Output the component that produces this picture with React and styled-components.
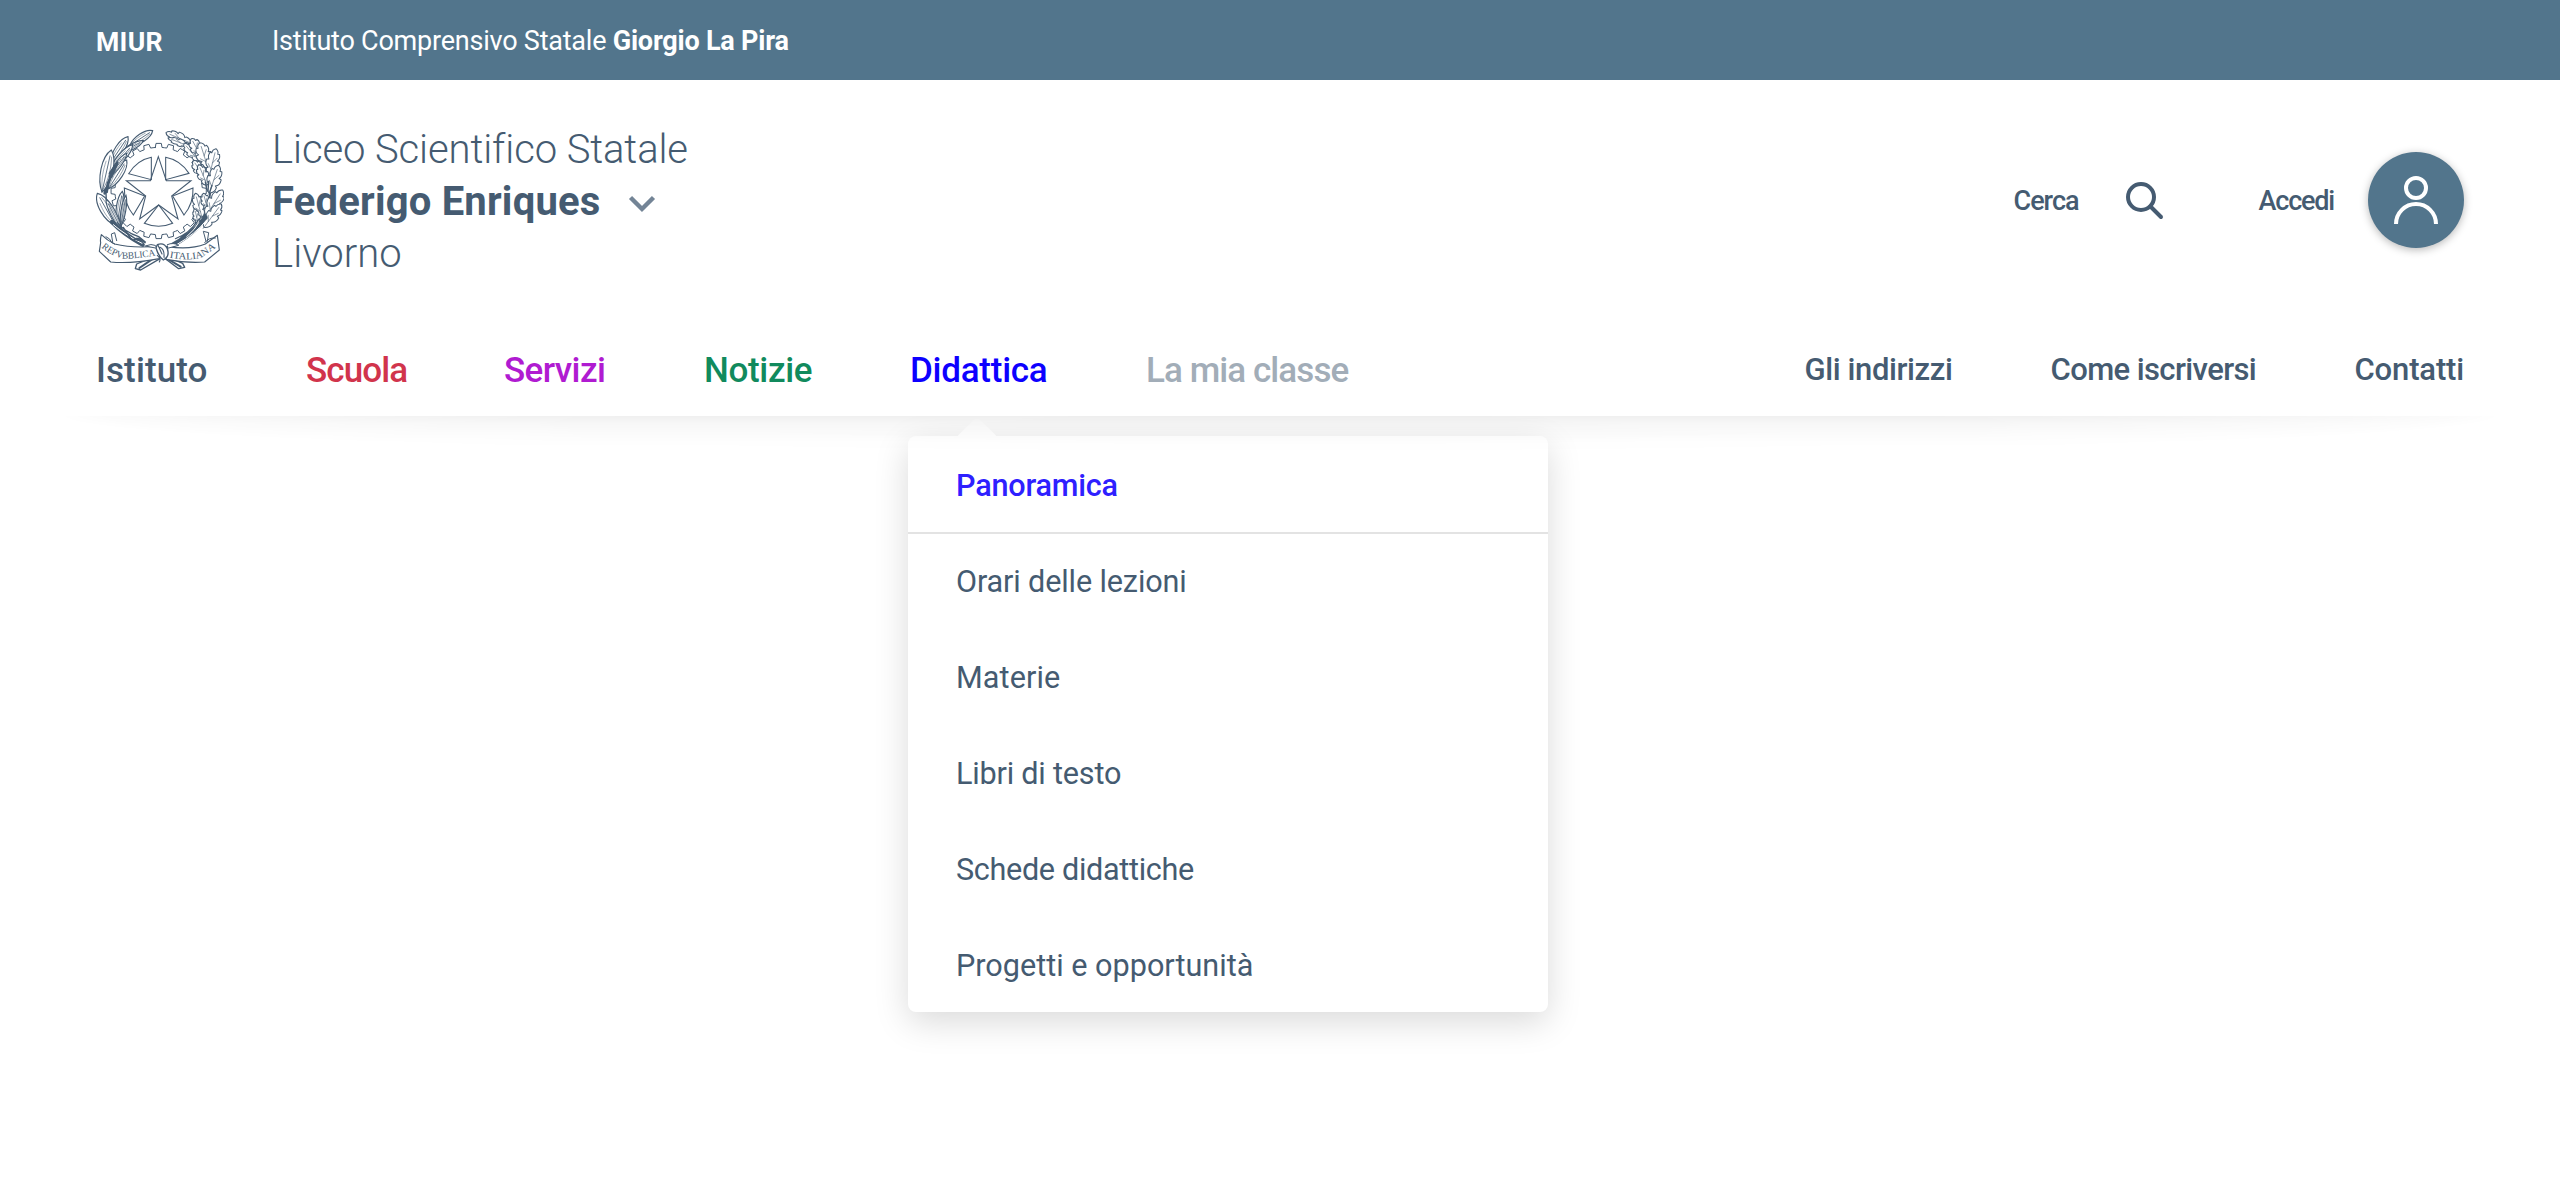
import React from "react";
import styled, { createGlobalStyle } from "styled-components";

const ink = "#455b71";
const steel = "#52758c";

const GlobalStyle = createGlobalStyle`
  * { box-sizing: border-box; }
  body {
    margin: 0;
    background: #fff;
    color: ${ink};
    font-family: Roboto, "Open Sans", sans-serif;
    -webkit-font-smoothing: antialiased;
  }
  a { color: inherit; text-decoration: none; }
`;

const Page = styled.div`
  min-height: 1200px;
  overflow: hidden;
`;

const TopBar = styled.div`
  display: flex;
  align-items: center;
  height: 80px;
  padding: 2px 96px 0;
  background: ${steel};
  color: #fff;
  font-size: 27px;
  line-height: 36px;
  white-space: nowrap;
`;

const Ministry = styled.a`
  width: 176px;
  padding-top: 2px;
  font-size: 26.6px;
  font-weight: 700;
  letter-spacing: 0.3px;
`;

const Institute = styled.a`
  font-weight: 400;
  letter-spacing: -0.22px;

  strong { font-weight: 700; letter-spacing: -0.22px; }
`;

const Header = styled.header`
  position: relative;

  &::after {
    content: "";
    position: absolute;
    z-index: 3;
    top: 100%;
    left: 60px;
    right: 60px;
    height: 40px;
    pointer-events: none;
    background: linear-gradient(
      rgba(0, 0, 0, 0.062) 0,
      rgba(0, 0, 0, 0.036) 8px,
      rgba(0, 0, 0, 0.022) 15px,
      rgba(0, 0, 0, 0.008) 26px,
      rgba(0, 0, 0, 0) 38px
    );
    mask-image: radial-gradient(
      farthest-side at 50% 0,
      #000 0%,
      rgba(0, 0, 0, 0.9) 58%,
      rgba(0, 0, 0, 0.7) 74%,
      rgba(0, 0, 0, 0.45) 89%,
      rgba(0, 0, 0, 0.25) 96%,
      transparent 100%
    );
  }
`;

const BrandRow = styled.div`
  display: flex;
  align-items: center;
  height: 240px;
  padding: 0 96px;
`;

const Title = styled.h1`
  margin: 4px 0 0 48px;
  font-size: 40px;
  font-weight: 300;
  line-height: 52px;
  white-space: nowrap;
`;

const TitleLine = styled.span`
  display: flex;
  align-items: center;
  font-weight: ${(p) => (p.$bold ? 700 : 300)};
  letter-spacing: ${(p) => p.$track || 0}px;

  svg { margin: 3px 0 0 27px; }
`;

const Tools = styled.div`
  display: flex;
  align-items: center;
  margin-left: auto;
  font-size: 27px;
  font-weight: 500;
`;

const Tool = styled.a`
  display: flex;
  align-items: center;
  gap: ${(p) => p.$gap}px;
  margin-left: ${(p) => p.$before || 0}px;
  letter-spacing: ${(p) => p.$track}px;
`;

const ToolLabel = styled.span`
  padding-top: 2px;
`;

const Avatar = styled.span`
  display: grid;
  place-items: center;
  width: 96px;
  height: 96px;
  border-radius: 50%;
  background: ${steel};
  box-shadow: 0 2px 8px rgba(0, 0, 0, 0.28);
`;

const NavRow = styled.nav`
  display: flex;
  justify-content: space-between;
  align-items: center;
  height: 96px;
  padding: 4px 96px 0;
  white-space: nowrap;
`;

const NavList = styled.ul`
  display: grid;
  grid-template-columns: ${(p) => p.$columns};
  margin: ${(p) => p.$top || 0}px 0 0;
  padding: 0;
  list-style: none;
  font-size: ${(p) => p.$size}px;
  font-weight: 500;
  line-height: 44px;
`;

const NavItem = styled.li`
  position: relative;
  color: ${(p) => p.$color || ink};
  letter-spacing: ${(p) => p.$track}px;
`;

const Dropdown = styled.ul`
  position: absolute;
  z-index: 2;
  top: 87px;
  left: -2px;
  width: 640px;
  margin: 0;
  padding: 0;
  list-style: none;
  border-radius: 8px;
  background: #fff;
  box-shadow: 0 10px 34px rgba(0, 0, 0, 0.15);
  clip-path: inset(-20px -60px -70px -60px);
  color: ${ink};

  &::before {
    content: "";
    position: absolute;
    top: -13px;
    left: 53px;
    width: 32px;
    height: 32px;
    border-radius: 6px;
    background: #fff;
    transform: rotate(45deg);
  }
`;

const DropdownItem = styled.li`
  position: relative;
  display: flex;
  align-items: center;
  height: 96px;
  padding: 3px 48px 0;
  font-size: 30.6px;
  font-weight: ${(p) => (p.$lead ? 500 : 400)};
  letter-spacing: ${(p) => p.$track}px;
  color: ${(p) => (p.$lead ? "#2e20ff" : ink)};
  box-shadow: ${(p) => (p.$lead ? "0 2px 0 #e3e3e3" : "none")};
`;

const CX = 236;
const CY = 243;

const polar = (r, deg) => {
  const a = (deg * Math.PI) / 180;
  return `${(CX + r * Math.sin(a)).toFixed(1)} ${(CY - r * Math.cos(a)).toFixed(1)}`;
};

const gearPath = (() => {
  const teeth = 24;
  const step = 360 / teeth;
  let d = "";
  for (let i = 0; i < teeth; i += 1) {
    const a = i * step;
    d += `${i ? "L" : "M"}${polar(131, a - 4.4)}L${polar(143, a - 3.2)}L${polar(143, a + 3.2)}L${polar(131, a + 4.4)}A131 131 0 0 1 ${polar(131, a + step - 4.4)}`;
  }
  return `${d}Z`;
})();

/* A slender olive leaf running from its base to its tip. */
function OliveLeaf({ from, to, w }) {
  const [x, y] = from;
  const dx = to[0] - x;
  const dy = to[1] - y;
  const len = Math.hypot(dx, dy);
  const deg = (Math.atan2(dy, dx) * 180) / Math.PI;
  const h = w / 2;
  const side = (k) => `M0 0C${len * 0.25} ${k * 1.25} ${len * 0.8} ${k * 1.4} ${len} 0`;
  return (
    <g transform={`translate(${x} ${y}) rotate(${deg})`}>
      <path d={`${side(h)}C${len * 0.8} ${-h * 1.4} ${len * 0.25} ${-h * 1.25} 0 0Z`} fill="#fff" strokeWidth="3.4" />
      <path d={`M0 0L${len * 0.86} 0`} strokeWidth="2.4" />
      <path d={`M${len * 0.08} 2C${len * 0.3} ${h * 0.6} ${len * 0.6} ${h * 0.65} ${len * 0.84} ${h * 0.3}`} strokeWidth="1.6" />
      <path d={`M${len * 0.08} -2C${len * 0.3} ${-h * 0.6} ${len * 0.5} ${-h * 0.6} ${len * 0.72} ${-h * 0.45}`} strokeWidth="1.4" />
    </g>
  );
}

/* A lobed oak leaf running from its base to its tip. */
function OakLeaf({ from, to, w }) {
  const [x, y] = from;
  const dx = to[0] - x;
  const dy = to[1] - y;
  const len = Math.hypot(dx, dy);
  const deg = (Math.atan2(dy, dx) * 180) / Math.PI;
  const u = (a) => (a * len).toFixed(1);
  const v = (b) => ((b * w) / 2).toFixed(1);
  const edge = (s) =>
    `Q${u(0.1)} ${v(0.75 * s)} ${u(0.26)} ${v(0.7 * s)}L${u(0.3)} ${v(0.48 * s)}Q${u(0.36)} ${v(1.1 * s)} ${u(0.56)} ${v(1 * s)}L${u(0.58)} ${v(0.65 * s)}Q${u(0.68)} ${v(1 * s)} ${u(0.83)} ${v(0.72 * s)}L${u(0.82)} ${v(0.46 * s)}Q${u(0.94)} ${v(0.5 * s)} ${u(1)} 0`;
  return (
    <g transform={`translate(${x} ${y}) rotate(${deg})`} strokeLinejoin="round">
      <path d={`M0 0${edge(1)}L0 0${edge(-1)}L0 0Z`} fill="#fff" stroke="none" />
      <path d={`M0 0${edge(1)}M0 0${edge(-1)}`} strokeWidth="3" />
      <path d={`M-4 0L${u(0.85)} 0M${u(0.25)} 0L${u(0.42)} ${v(-0.6)}M${u(0.48)} 0L${u(0.68)} ${v(0.5)}`} strokeWidth="1.7" />
    </g>
  );
}

const olive = [
  [[150, 106], [218, 62], 25],
  [[120, 130], [190, 92], 17],
  [[92, 158], [144, 80], 27],
  [[92, 180], [158, 104], 23],
  [[66, 246], [94, 120], 36],
  [[86, 236], [140, 150], 29],
  [[88, 200], [140, 130], 17],
  [[106, 346], [52, 250], 36],
  [[112, 340], [127, 244], 21],
  [[122, 350], [138, 256], 14],
  [[126, 362], [78, 268], 17],
];

const oak = [
  [[334, 100], [258, 68], 34],
  [[336, 112], [264, 84], 22],
  [[356, 152], [312, 100], 30],
  [[364, 140], [334, 86], 38],
  [[384, 174], [360, 98], 46],
  [[388, 198], [408, 116], 40],
  [[372, 200], [340, 152], 34],
  [[382, 226], [356, 164], 34],
  [[388, 250], [416, 166], 42],
  [[366, 322], [346, 250], 34],
  [[384, 300], [370, 250], 28],
  [[378, 318], [428, 240], 44],
  [[372, 352], [424, 282], 38],
  [[356, 346], [344, 296], 22],
];

function Emblem() {
  return (
    <svg width="128" height="144" viewBox="48 54 384 432" fill="none" stroke={ink} strokeWidth="3" strokeLinecap="round" role="img" aria-label="Repubblica Italiana">
      <path d={gearPath} />
      <g strokeWidth="3.2" strokeLinejoin="miter">
        <path d="M235 140L211 212H139L197 258L179 327L236 285L294 327L275 258L333 212H259Z" />
        <path d="M214 142V209L146 191Q172 150 214 142Z" />
        <path d="M257 142V209L327 190Q300 150 257 142Z" />
        <path d="M133 234L194 258L160 315Q132 280 133 234Z" />
        <path d="M339 234L278 258L312 315Q341 280 339 234Z" />
        <path d="M236 285L193 340Q236 358 278 340Z" />
      </g>

      <g>
        <path d="M84 226Q88 190 118 140M74 250Q78 214 100 176" strokeWidth="8" />
        <path d="M78 246Q76 300 104 342" strokeWidth="4" />
        {olive.map(([from, to, w]) => (
          <OliveLeaf key={`${from}-${to}`} from={from} to={to} w={w} />
        ))}
        <path d="M104 168L86 216M112 158L94 200M84 218L80 246M90 190L100 176" strokeWidth="8" />
        <path d="M96 336Q130 372 188 404" strokeWidth="13" />
        <path d="M100 344Q134 374 186 400" stroke="#fff" strokeWidth="3" />
        <path d="M112 338Q134 366 176 380L196 396M130 352L154 388" strokeWidth="4" />
        <path d="M162 388Q178 376 196 398Q180 392 162 388Z" fill={ink} />
      </g>

      <g>
        <path d="M390 190Q398 270 366 334" strokeWidth="6" />
        {oak.map(([from, to, w]) => (
          <OakLeaf key={`${from}-${to}`} from={from} to={to} w={w} />
        ))}
        <path d="M386 214L384 244M396 226L388 250M376 216L380 238" strokeWidth="4" />
        <path d="M376 322Q340 374 262 414" strokeWidth="14" />
        <path d="M380 330Q346 372 290 404" stroke="#fff" strokeWidth="3" />
        <path d="M358 326Q342 352 302 384M346 340Q332 368 286 386" strokeWidth="3.4" />
        <path d="M356 338Q346 358 320 380" stroke="#fff" strokeWidth="3" />
      </g>

      <g strokeLinejoin="round">
        <path d="M224 440L170 462L166 476L182 480L240 446M258 448L296 476L314 472L308 460L262 440" fill="#fff" strokeWidth="4" />
        <path d="M216 448L178 474M268 450L302 470" strokeWidth="6" />
        <path d="M98 396L94 372L104 368L110 392M382 394L386 368L370 364L378 394" fill="#fff" />
        <path d="M64 374Q60 390 62 398L58 424L92 456Q150 462 238 446L240 408Q160 416 104 402Q82 392 64 374Z" fill="#fff" strokeWidth="3.4" />
        <path d="M264 410Q330 420 376 402L412 376L418 420L374 456Q320 460 258 448Z" fill="#fff" strokeWidth="3.4" />
        <path d="M96 398Q90 384 78 380M374 398Q386 382 406 384M104 402L96 398" />
        <path d="M226 406Q214 400 196 408L226 414M262 404Q280 396 296 406L266 414" fill="#fff" />
        <path d="M232 404Q252 396 262 416Q270 440 250 450Q236 440 228 414Z" fill="#fff" strokeWidth="4" />
        <path d="M240 412Q254 418 252 442M232 436Q244 446 238 456M234 406L246 432" strokeWidth="3.4" />
      </g>

      <g fill={ink} stroke="none" fontFamily="'Liberation Serif', serif" fontSize="29">
        <path id="ribbon-left" d="M64 412Q100 442 134 446Q184 446 236 434" fill="none" />
        <path id="ribbon-right" d="M268 443Q330 454 364 442Q388 428 420 404" fill="none" />
        <text textLength="172" lengthAdjust="spacingAndGlyphs"><textPath href="#ribbon-left">REPVBBLICA</textPath></text>
        <text textLength="150" lengthAdjust="spacingAndGlyphs"><textPath href="#ribbon-right">ITALIANA</textPath></text>
      </g>
    </svg>
  );
}

const ChevronIcon = () => (
  <svg width="28" height="20" viewBox="0 0 28 20" fill="none" stroke="#738496" strokeWidth="4.4">
    <path d="M2.5 3.5L14 15L25.5 3.5" />
  </svg>
);

const SearchIcon = () => (
  <svg width="40" height="40" viewBox="0 0 40 40" fill="none" stroke={ink} strokeWidth="4">
    <circle cx="17" cy="17" r="13" />
    <path d="M26.5 26.5L37 37" strokeLinecap="round" />
  </svg>
);

const UserIcon = () => (
  <svg width="48" height="52" viewBox="0 0 48 52" fill="none" stroke="#fff" strokeWidth="4">
    <circle cx="24" cy="14" r="10" />
    <path d="M4 50a20 20 0 0 1 40 0" />
  </svg>
);

const primary = [
  { label: "Istituto", track: 0.1 },
  { label: "Scuola", color: "#d1344c", track: -0.9 },
  { label: "Servizi", color: "#b01bd1", track: -0.6 },
  { label: "Notizie", color: "#118a5d", track: -0.33 },
  { label: "Didattica", color: "#0d00ff", track: -0.25, open: true },
  { label: "La mia classe", color: "#a2adb8", track: -0.92 },
];

const secondary = [
  { label: "Gli indirizzi", track: -0.4 },
  { label: "Come iscriversi", track: -0.6 },
  { label: "Contatti", track: -0.15 },
];

const menu = [
  { label: "Panoramica", lead: true, track: -0.2 },
  { label: "Orari delle lezioni", track: -0.13 },
  { label: "Materie", track: 0.12 },
  { label: "Libri di testo", track: -0.2 },
  { label: "Schede didattiche", track: -0.33 },
  { label: "Progetti e opportunità", track: 0 },
];

export default function App() {
  return (
    <Page>
      <GlobalStyle />
      <TopBar>
        <Ministry href="#">MIUR</Ministry>
        <Institute href="#">
          Istituto Comprensivo Statale <strong>Giorgio La Pira</strong>
        </Institute>
      </TopBar>
      <Header>
        <BrandRow>
          <Emblem />
          <Title>
            <TitleLine $track={-0.1}>Liceo Scientifico Statale</TitleLine>
            <TitleLine $bold $track={0.2}>
              Federigo Enriques
              <ChevronIcon />
            </TitleLine>
            <TitleLine $track={0.05}>Livorno</TitleLine>
          </Title>
          <Tools>
            <Tool href="#" $gap={45} $track={-1}>
              <ToolLabel>Cerca</ToolLabel>
              <SearchIcon />
            </Tool>
            <Tool href="#" $gap={34} $before={95} $track={-1.2}>
              <ToolLabel>Accedi</ToolLabel>
              <Avatar><UserIcon /></Avatar>
            </Tool>
          </Tools>
        </BrandRow>
        <NavRow>
          <NavList $size={35} $top={2} $columns="210px 198px 200px 206px 236px auto">
            {primary.map((item) => (
              <NavItem key={item.label} $color={item.color} $track={item.track}>
                <a href="#">{item.label}</a>
                {item.open && (
                  <Dropdown>
                    {menu.map((entry) => (
                      <DropdownItem key={entry.label} $lead={entry.lead} $track={entry.track}>
                        <a href="#">{entry.label}</a>
                      </DropdownItem>
                    ))}
                  </Dropdown>
                )}
              </NavItem>
            ))}
          </NavList>
          <NavList $size={31} $columns="246px 304px auto">
            {secondary.map((item) => (
              <NavItem key={item.label} $track={item.track}>
                <a href="#">{item.label}</a>
              </NavItem>
            ))}
          </NavList>
        </NavRow>
      </Header>
    </Page>
  );
}
